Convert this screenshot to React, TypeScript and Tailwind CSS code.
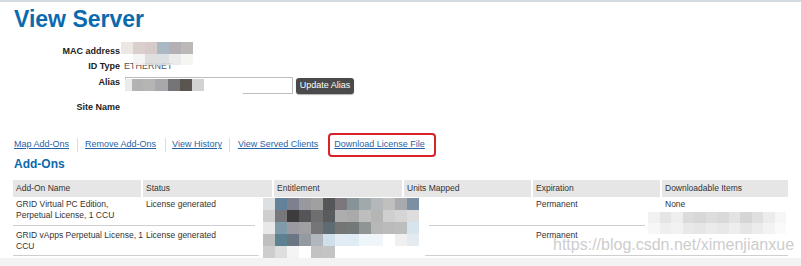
import React from "react";

const macRow1 = ["#ebe7e5", "#d9cfcc", "#d6cbc8", "#aab8c3", "#b3afb3", "#bdb8b8"];
const macRow2 = ["transparent", "#f4f4f4", "#dcdcdc", "#d9dde1", "#e9e9e9", "#f4f4f0"];
const aliasMosaic: [string, number][] = [
  ["#ebebeb", 7],
  ["#b2b2b2", 11],
  ["#b5b5b5", 12],
  ["#a8a8ac", 13],
  ["#757577", 12],
  ["#5b5552", 12],
  ["#d2d2d2", 12],
];
const entMosaic = [
  ["#dde0e3", "#62819a", "#7e8090", "#98999e", "#a0a0a0", "#55565a", "#7b777c", "#86949a", "#a1aaab", "#b4b8ba", "#c0c0c0", "#a8aaad", "#7b90a2"],
  ["#cfcfcf", "#78787a", "#3c3c3e", "#555557", "#6f6f70", "#5a5b5d", "#adadad", "#aaaaaa", "#bebebe", "#b5b5b5", "#cfcfcf", "#d5d5d5", "#dddddd"],
  ["#e8e8e8", "#7f9aa8", "#9b9aa3", "#a0a0a2", "#757577", "#5f6b72", "#767575", "#737878", "#8f9494", "#b7b7b7", "#bbbbbb", "#bcbdbd", "#d6e4ee"],
  ["#bfbfbf", "#5e8190", "#6c7584", "#9599a0", "#b0b8be", "#cfe0ea", "#e3ecf2", "#dfecf5", "#eff6f9", "#f1f5f7", "#ffffff", "#f0f0f0", "#e3eaf0"],
  ["#cdcdcd", "#dedede", "#f4f4f4", "#ffffff", "#c2c2c2", "#c4c4c4", "#ffffff", "#ffffff", "#ffffff", "#ffffff", "#ffffff", "#ffffff", "#ffffff"],
];
const dlMosaic = [
  ["#f1f1f1", "#e5e5e5", "#eeeeee", "#dbdbdb", "#d7d7d7", "#dddddd", "#d9d9d9", "#e3e3e3", "#d5d5d5", "#dfdfdf", "#ececec", "#f6f6f6"],
  ["#f7f7f7", "#efefef", "#f2f2f2", "#e9e9e9", "#e6e6e6", "#ebebeb", "#e8e8e8", "#eeeeee", "#e5e5e5", "#ececec", "#f3f3f3", "#fafafa"],
];

function MosaicRow({ colors, w, h }: { colors: string[]; w: string; h: string }) {
  return (
    <div className="flex">
      {colors.map((c, i) => (
        <div key={i} className={`${w} ${h}`} style={{ backgroundColor: c }} />
      ))}
    </div>
  );
}

const cols = "grid grid-cols-[128px_129px_128px_127px_127px_126px] gap-x-[2px]";

export default function App() {
  return (
    <div className="relative w-[801px] h-[266px] bg-white overflow-hidden flex flex-col font-['Liberation_Sans',Arial,sans-serif] text-[#333]">
      <div className="h-[2px] bg-[#d5dbe2]" />
      <h1 className="mt-[4px] pl-[14px] text-[23px] leading-[26px] font-bold text-[#0b69ad]">View Server</h1>

      <div className="relative mt-[12px] flex flex-col text-[9px]">
        <div className="flex h-[15px] items-center gap-[4px]">
          <div className="w-[120px] text-right font-bold leading-[15px] text-[#222]">MAC address</div>
        </div>
        <div className="flex h-[15px] items-center gap-[4px]">
          <div className="w-[120px] text-right font-bold leading-[15px] text-[#222]">ID Type</div>
          <div className="leading-[15px] text-[#555]">ETHERNET</div>
        </div>
        <div className="absolute left-[121px] top-[-2px] flex flex-col">
          <MosaicRow colors={macRow1} w="w-[12px]" h="h-[12px]" />
          <div className="opacity-90">
            <MosaicRow colors={macRow2} w="w-[12px]" h="h-[11px]" />
          </div>
        </div>
        <div className="mt-[3px] flex h-[17px] gap-[4px]">
          <div className="w-[120px] text-right font-bold leading-[11px] text-[#222]">Alias</div>
          <div className="relative ml-[1px] h-[17px] w-[168px] border border-[#bdbdbd] bg-white">
            <div className="absolute left-[-1px] top-[1px] flex">
              {aliasMosaic.map(([c, w], i) => (
                <div key={i} className="h-[12px]" style={{ backgroundColor: c, width: w }} />
              ))}
            </div>
            <div className="absolute left-[-3px] top-[13px] h-[8px] w-[120px] rounded-full bg-white" />
          </div>
          <button className="mt-[1px] ml-[-1px] flex h-[16px] w-[58px] items-center justify-center rounded-[3px] bg-[#4a4a4a] text-[9px] text-white shadow-[0_1px_1px_rgba(0,0,0,0.3)]">
            Update Alias
          </button>
        </div>
        <div className="mt-[6px] flex h-[15px] items-center gap-[4px]">
          <div className="w-[120px] text-right font-bold leading-[15px] text-[#222]">Site Name</div>
        </div>
      </div>

      <div className="mt-[18px] flex h-[24px] items-center pl-[14px] text-[9px] text-[#1f63a6]">
        <a className="underline">Map Add-Ons</a>
        <span className="ml-[8px] mr-[7px] h-[14px] w-px bg-[#dcdcdc]" />
        <a className="underline">Remove Add-Ons</a>
        <span className="ml-[9px] mr-[6px] h-[14px] w-px bg-[#dcdcdc]" />
        <a className="underline">View History</a>
        <span className="ml-[7px] mr-[8px] h-[14px] w-px bg-[#dcdcdc]" />
        <a className="underline">View Served Clients</a>
        <div className="ml-[10px] flex h-[24px] items-center rounded-[4px] border-2 border-[#d8222a] pl-[4px] pr-[9px]">
          <a className="underline">Download License File</a>
        </div>
      </div>

      <h2 className="pl-[14px] text-[12px] leading-[14px] font-bold text-[#0b69ad]">Add-Ons</h2>

      <div className="relative ml-[13px] mt-[9px] w-[775px] text-[8.5px] text-[#333]">
        <div className={`${cols} h-[17px]`}>
          {["Add-On Name", "Status", "Entitlement", "Units Mapped", "Expiration", "Downloadable Items"].map((h) => (
            <div key={h} className="flex items-center bg-[#e6e6e6] pl-[3px] leading-[17px]">
              {h}
            </div>
          ))}
        </div>
        <div className={`${cols} h-[29px] border-b border-[#cfcfcf] pt-[2px] leading-[10.5px]`}>
          <div className="whitespace-nowrap pl-[3px]">
            GRID Virtual PC Edition,
            <br />
            Perpetual License, 1 CCU
          </div>
          <div className="pl-[3px]">License generated</div>
          <div />
          <div />
          <div className="pl-[3px]">Permanent</div>
          <div className="pl-[3px]">None</div>
        </div>
        <div className={`${cols} h-[30px] border-b border-[#cfcfcf] pt-[4px] leading-[10.5px]`}>
          <div className="whitespace-nowrap pl-[3px]">
            GRID vApps Perpetual License, 1
            <br />
            CCU
          </div>
          <div className="pl-[3px]">License generated</div>
          <div />
          <div />
          <div className="pl-[3px]">Permanent</div>
          <div />
        </div>

        <div className="absolute left-[242px] top-[17px] rounded-[10px] bg-white pl-[8px] pr-[10px] pt-[1px]">
          {entMosaic.map((r, i) => (
            <MosaicRow key={i} colors={r} w="w-[12px]" h="h-[12px]" />
          ))}
        </div>
        <div className="absolute left-[632px] top-[31px] rounded-[8px] bg-white px-[3px] py-[1px]">
          {dlMosaic.map((r, i) => (
            <MosaicRow key={i} colors={r} w="w-[11.5px]" h="h-[11px]" />
          ))}
        </div>
      </div>

      <div className="mt-[2px] flex-1 bg-[#f3f3f3]" />

      <div className="absolute left-[553px] top-[236px] text-[16px] leading-[18px] text-[#cdcdcd]">
        https://blog.csdn.net/ximenjianxue
      </div>
    </div>
  );
}
